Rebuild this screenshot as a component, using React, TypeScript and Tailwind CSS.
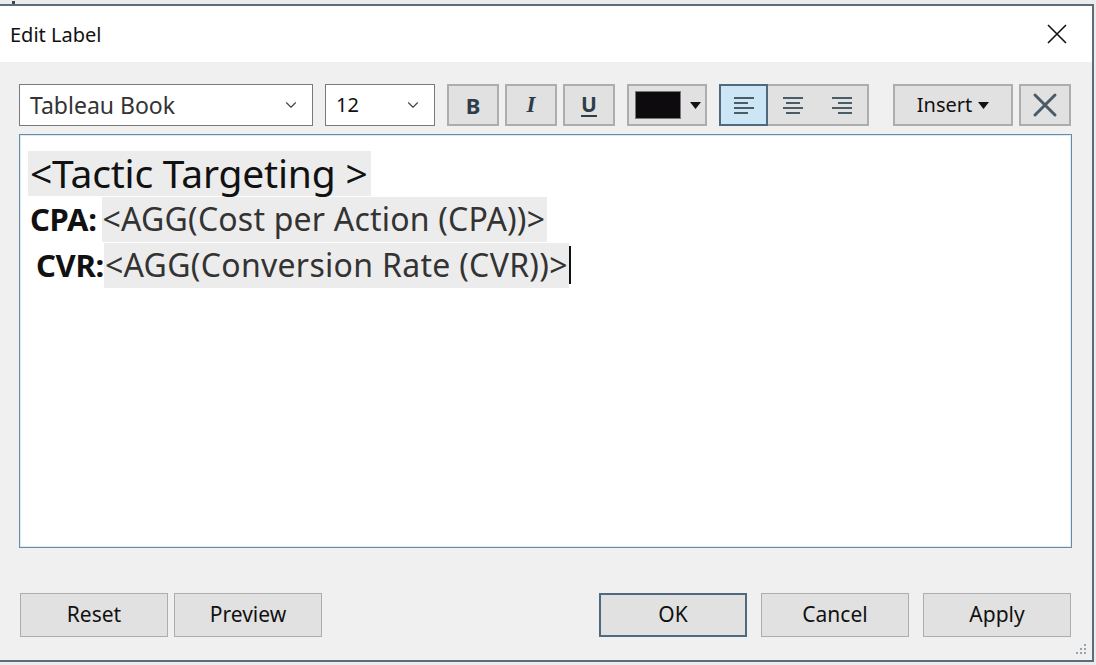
import { ChevronDown } from "lucide-react";

const ui = { fontFamily: '"Noto Sans", "Open Sans", sans-serif' };

function ToolButton({ children, className = "" }: { children: React.ReactNode; className?: string }) {
    return (
        <div className={`h-[42px] flex items-center justify-center bg-[#e1e1e1] border-2 border-[#adadad] ${className}`}>
            {children}
        </div>
    );
}

function AlignIcon({ kind }: { kind: "left" | "center" | "right" }) {
    const rows = [
        { y: 2, w: 20 },
        { y: 7, w: 14 },
        { y: 12, w: 20 },
        { y: 17, w: 14 },
    ];
    return (
        <svg width="22" height="20" viewBox="0 0 22 20">
            {rows.map((r) => {
                const x = kind === "left" ? 1 : kind === "center" ? 1 + (20 - r.w) / 2 : 21 - r.w;
                return <rect key={r.y} x={x} y={r.y} width={r.w} height="2" fill="#4b5c69" />;
            })}
        </svg>
    );
}

function FooterButton({ label, primary = false }: { label: string; primary?: boolean }) {
    return (
        <button
            className={`w-[148px] h-[44px] bg-[#e1e1e1] text-[21px] text-[#111] ${
                primary ? "border-2 border-[#4f6a80]" : "border border-[#adadad]"
            }`}
            style={ui}
        >
            {label}
        </button>
    );
}

function ResizeGrip() {
    const dots = [
        [8, 0],
        [4, 4],
        [8, 4],
        [0, 8],
        [4, 8],
        [8, 8],
    ];
    return (
        <svg width="11" height="11" viewBox="0 0 11 11">
            {dots.map(([x, y]) => (
                <rect key={`${x}-${y}`} x={x} y={y} width="2" height="2" fill="#9aa3aa" />
            ))}
        </svg>
    );
}

export default function App() {
    return (
        <div className="w-[1096px] h-[665px] bg-[#ececec] flex flex-col overflow-hidden" style={ui}>
            {/* window behind */}
            <div className="h-[4px] relative">
                <div className="absolute left-[12px] top-[1px] w-[3px] h-[3px] bg-[#3d4750]" />
            </div>

            <div className="w-[1094px] h-[658px] flex flex-col border-t-2 border-r-2 border-b-2 border-[#5c6c79]">
                {/* title bar */}
                <div className="h-[56px] bg-white flex items-center justify-between pl-[10px] pr-[24px]">
                    <span className="text-[20px] text-[#111] pt-[1px]">Edit Label</span>
                    <svg width="22" height="22" viewBox="0 0 22 22">
                        <path d="M2 2 L20 20 M20 2 L2 20" stroke="#111" strokeWidth="1.6" />
                    </svg>
                </div>

                {/* body */}
                <div className="flex-1 bg-[#f0f0f0] flex flex-col pl-[19px] pr-[21px] pt-[22px] relative">
                    {/* toolbar */}
                    <div className="flex items-center h-[42px]">
                        <div className="w-[294px] h-[42px] bg-white border border-[#7a7a7a] flex items-center justify-between pl-[10px] pr-[12px]">
                            <span className="text-[23px] text-[#333]">Tableau Book</span>
                            <ChevronDown size={18} strokeWidth={1.5} color="#444" />
                        </div>
                        <div className="ml-[12px] w-[110px] h-[42px] bg-white border border-[#7a7a7a] flex items-center justify-between pl-[10px] pr-[12px]">
                            <span className="text-[20px] text-[#111]">12</span>
                            <ChevronDown size={18} strokeWidth={1.5} color="#444" />
                        </div>

                        <ToolButton className="ml-[12px] w-[52px]">
                            <span className="text-[22px] font-bold text-[#2f3d48]">B</span>
                        </ToolButton>
                        <ToolButton className="ml-[6px] w-[52px]">
                            <span className="text-[23px] italic font-bold text-[#2f3d48]" style={{ fontFamily: '"Liberation Serif", serif' }}>
                                I
                            </span>
                        </ToolButton>
                        <ToolButton className="ml-[6px] w-[52px]">
                            <span className="text-[21px] font-bold text-[#2f3d48] underline underline-offset-[3px] decoration-2">U</span>
                        </ToolButton>

                        <ToolButton className="ml-[12px] w-[80px] justify-start pl-[6px] gap-[9px]">
                            <div className="w-[46px] h-[28px] bg-[#0e0b0f] border border-[#777]" />
                            <svg width="11" height="7" viewBox="0 0 11 7">
                                <path d="M0 0 H11 L5.5 7 Z" fill="#111" />
                            </svg>
                        </ToolButton>

                        <div className="ml-[12px] w-[150px] h-[42px] flex border-2 border-[#adadad] bg-[#e1e1e1]">
                            <div className="w-[49px] -my-[2px] -ml-[2px] border-2 border-[#4f6a80] bg-[#cde6f6] flex items-center justify-center">
                                <AlignIcon kind="left" />
                            </div>
                            <div className="flex-1 flex items-center justify-center">
                                <AlignIcon kind="center" />
                            </div>
                            <div className="flex-1 flex items-center justify-center">
                                <AlignIcon kind="right" />
                            </div>
                        </div>

                        <ToolButton className="ml-[24px] w-[120px] gap-[6px]">
                            <span className="text-[20px] text-[#111]">Insert</span>
                            <svg width="11" height="7" viewBox="0 0 11 7">
                                <path d="M0 0 H11 L5.5 7 Z" fill="#111" />
                            </svg>
                        </ToolButton>
                        <ToolButton className="ml-[6px] w-[52px]">
                            <svg width="26" height="26" viewBox="0 0 26 26">
                                <path d="M3 3 L23 23 M23 3 L3 23" stroke="#4b5a66" strokeWidth="3" strokeLinecap="round" />
                            </svg>
                        </ToolButton>
                    </div>

                    {/* editor */}
                    <div className="mt-[8px] w-[1053px] h-[414px] bg-white border border-[#6a8ba3] shadow-[inset_0_0_0_1px_#d8ecf8] pl-[8px] pt-[15px] text-[#111]">
                        <div className="h-[46px] flex items-center">
                            <span className="bg-[#ececec] h-[45px] flex items-center pl-[2px] pr-[3px] text-[39px] tracking-[-0.2px]">&lt;Tactic Targeting &gt;</span>
                        </div>
                        <div className="h-[46px] flex items-center text-[32px]">
                            <span className="font-bold pl-[2px] pr-[5px] text-[31px] tracking-[-0.3px]">CPA:</span>
                            <span className="bg-[#ececec] h-[45px] flex items-center pl-[1px] pr-[2px] text-[#333] tracking-[0.2px]">
                                &lt;AGG(Cost per Action (CPA))&gt;
                            </span>
                        </div>
                        <div className="h-[46px] flex items-center text-[32px]">
                            <span className="font-bold pl-[8px] text-[31px] tracking-[-0.3px]">CVR:</span>
                            <span className="bg-[#ececec] h-[45px] flex items-center pl-[1px] pr-[1px] text-[#333] tracking-[0.3px]">
                                &lt;AGG(Conversion Rate (CVR))&gt;
                            </span>
                            <span className="w-[2px] h-[38px] bg-[#111]" />
                        </div>
                    </div>

                    {/* footer */}
                    <div className="mt-[45px] pl-[1px] flex items-center">
                        <FooterButton label="Reset" />
                        <div className="ml-[6px]">
                            <FooterButton label="Preview" />
                        </div>
                        <div className="ml-auto flex gap-[14px]">
                            <FooterButton label="OK" primary />
                            <FooterButton label="Cancel" />
                            <FooterButton label="Apply" />
                        </div>
                    </div>

                    <div className="absolute right-[5px] bottom-[5px]">
                        <ResizeGrip />
                    </div>
                </div>
            </div>
        </div>
    );
}
